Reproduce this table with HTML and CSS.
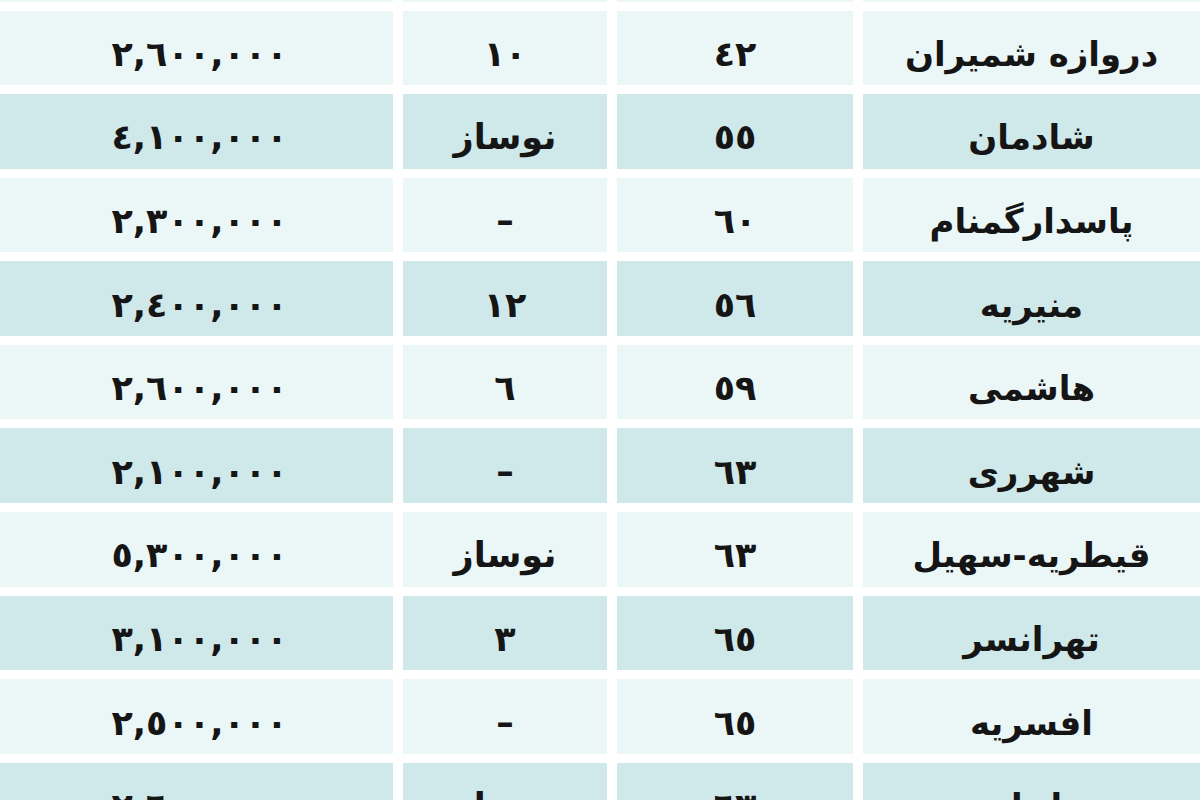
FILE: index.html
```html
<!DOCTYPE html>
<html lang="fa">
<head>
<meta charset="utf-8">
<link rel="stylesheet" href="styles.css">
<title>قیمت مسکن</title>
</head>
<body>
<div class="table" dir="rtl">
  <div class="cell head name">منطقه</div>
  <div class="cell head">متراژ (متر)</div>
  <div class="cell head">سن بنا (سال)</div>
  <div class="cell head">قیمت هر متر (تومان)</div>

  <div class="cell light name">دروازه شمیران</div>
  <div class="cell light num">٤٢</div>
  <div class="cell light num">١٠</div>
  <div class="cell light price">٢,٦٠٠,٠٠٠</div>

  <div class="cell blue name">شادمان</div>
  <div class="cell blue num">٥٥</div>
  <div class="cell blue">نوساز</div>
  <div class="cell blue price">٤,١٠٠,٠٠٠</div>

  <div class="cell light name">پاسدارگمنام</div>
  <div class="cell light num">٦٠</div>
  <div class="cell light">–</div>
  <div class="cell light price">٢,٣٠٠,٠٠٠</div>

  <div class="cell blue name">منیریه</div>
  <div class="cell blue num">٥٦</div>
  <div class="cell blue num">١٢</div>
  <div class="cell blue price">٢,٤٠٠,٠٠٠</div>

  <div class="cell light name">هاشمی</div>
  <div class="cell light num">٥٩</div>
  <div class="cell light num">٦</div>
  <div class="cell light price">٢,٦٠٠,٠٠٠</div>

  <div class="cell blue name">شهرری</div>
  <div class="cell blue num">٦٣</div>
  <div class="cell blue">–</div>
  <div class="cell blue price">٢,١٠٠,٠٠٠</div>

  <div class="cell light name">قیطریه-سهیل</div>
  <div class="cell light num">٦٣</div>
  <div class="cell light">نوساز</div>
  <div class="cell light price">٥,٣٠٠,٠٠٠</div>

  <div class="cell blue name">تهرانسر</div>
  <div class="cell blue num">٦٥</div>
  <div class="cell blue num">٣</div>
  <div class="cell blue price">٣,١٠٠,٠٠٠</div>

  <div class="cell light name">افسریه</div>
  <div class="cell light num">٦٥</div>
  <div class="cell light">–</div>
  <div class="cell light price">٢,٥٠٠,٠٠٠</div>

  <div class="cell blue name">تهرانپارس</div>
  <div class="cell blue num">٦٣</div>
  <div class="cell blue">نوساز</div>
  <div class="cell blue price">٢,٦٠٠,٠٠٠</div>
</div>
</body>
</html>
```

FILE: styles.css
```css
html, body {
  margin: 0;
  padding: 0;
  background: #ffffff;
  overflow: hidden;
  width: 1200px;
  height: 800px;
}

.table {
  display: grid;
  grid-template-columns: 1fr 236px 204px 393px;
  grid-auto-rows: 74.6px;
  column-gap: 10px;
  row-gap: 9px;
  margin-top: -73.1px;
  font-family: "DejaVu Sans", "Noto Sans", sans-serif;
  font-weight: bold;
  font-size: 35px;
  color: #151515;
}

.cell {
  display: flex;
  align-items: center;
  justify-content: center;
  white-space: nowrap;
  padding-top: 12px;
  box-sizing: border-box;
  overflow: hidden;
}

.light {
  background: #ebf6f7;
}

.blue {
  background: #cfe8ea;
}

.head {
  background: #ebf6f7;
  align-items: flex-end;
  padding-top: 0;
  padding-bottom: 14px;
  line-height: 1;
  overflow: visible;
}

.name {
  font-size: 34px;
}

.num {
  letter-spacing: 3px;
}

.price {
  direction: ltr;
  letter-spacing: 6.5px;
  padding-left: 6px;
}
```
